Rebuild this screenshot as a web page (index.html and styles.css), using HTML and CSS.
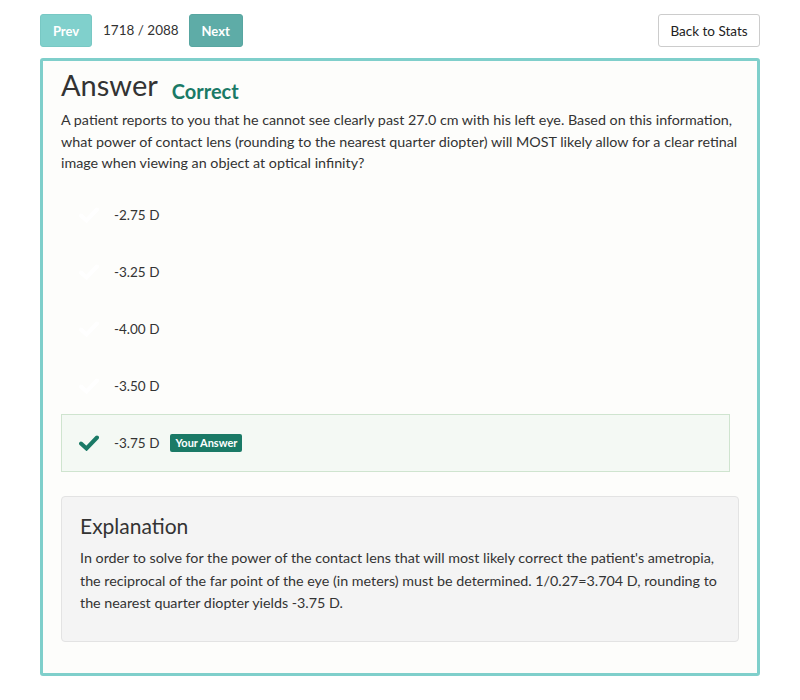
FILE: index.html
```html
<!DOCTYPE html>
<html>
<head>
<meta charset="utf-8">
<link rel="stylesheet" href="styles.css">
</head>
<body>
<div class="page">
  <div class="toolbar">
    <div class="nav">
      <button class="btn btn-prev">Prev</button>
      <span class="counter">1718 / 2088</span>
      <button class="btn btn-next">Next</button>
    </div>
    <button class="btn btn-back">Back to Stats</button>
  </div>
  <div class="panel">
    <div class="title-row">
      <h1 class="title">Answer</h1>
      <span class="status">Correct</span>
    </div>
    <p class="question">A patient reports to you that he cannot see clearly past 27.0 cm with his left eye. Based on this information, what power of contact lens (rounding to the nearest quarter diopter) will MOST likely allow for a clear retinal image when viewing an object at optical infinity?</p>
    <ul class="options">
      <li class="option"><svg class="check check-hidden" viewBox="0 0 20 16"><path d="M2 8.5 L7.5 13.5 L18 2.5" /></svg><span class="opt-text">-2.75 D</span></li>
      <li class="option"><svg class="check check-hidden" viewBox="0 0 20 16"><path d="M2 8.5 L7.5 13.5 L18 2.5" /></svg><span class="opt-text">-3.25 D</span></li>
      <li class="option"><svg class="check check-hidden" viewBox="0 0 20 16"><path d="M2 8.5 L7.5 13.5 L18 2.5" /></svg><span class="opt-text">-4.00 D</span></li>
      <li class="option"><svg class="check check-hidden" viewBox="0 0 20 16"><path d="M2 8.5 L7.5 13.5 L18 2.5" /></svg><span class="opt-text">-3.50 D</span></li>
      <li class="option option-selected"><svg class="check" viewBox="0 0 20 16"><path d="M2 8.5 L7.5 13.5 L18 2.5" /></svg><span class="opt-text">-3.75 D</span><span class="badge">Your Answer</span></li>
    </ul>
    <div class="well">
      <h2 class="well-title">Explanation</h2>
      <p class="well-text">In order to solve for the power of the contact lens that will most likely correct the patient's ametropia, the reciprocal of the far point of the eye (in meters) must be determined. 1/0.27=3.704 D, rounding to the nearest quarter diopter yields -3.75 D.</p>
    </div>
  </div>
</div>
</body>
</html>
```
FILE: styles.css
```css
* { box-sizing: border-box; }
html, body { margin: 0; padding: 0; background: #fff; }
body {
  font-family: Lato, "Open Sans", sans-serif;
  color: #333;
}
.page {
  width: 720px;
  margin-left: 40px;
  padding-top: 14px;
}
.toolbar {
  display: flex;
  justify-content: space-between;
  align-items: center;
  height: 33px;
}
.nav {
  display: flex;
  align-items: center;
}
.btn {
  font-family: Lato, "Open Sans", sans-serif;
  font-size: 13px;
  height: 33px;
  border-radius: 3px;
  cursor: pointer;
  padding: 0 8px;
}
.btn-prev {
  background: #80d0cc;
  border: 1px solid #78c8c4;
  color: #fff;
  font-weight: 700;
  width: 52px;
}
.btn-next {
  background: #5eaca7;
  border: 1px solid #58a6a1;
  color: #fff;
  font-weight: 700;
  width: 54px;
}
.counter {
  font-size: 13.5px;
  color: #333;
  margin: 0 10px 0 11px;
  position: relative;
  top: -1px;
}
.btn-back {
  background: #fff;
  border: 1px solid #ccc;
  color: #222;
  width: 102px;
  font-size: 13.5px;
}
.panel {
  margin-top: 11px;
  border: 3px solid #7fcfcb;
  border-radius: 3px;
  background: #fdfdfb;
  padding: 6px 18px 31px 18px;
}
.title-row {
  display: flex;
  align-items: baseline;
}
.title {
  margin: 0;
  font-size: 29px;
  font-weight: 400;
  color: #333;
  line-height: 36px;
}
.status {
  margin-left: 14px;
  font-size: 20px;
  font-weight: 700;
  color: #1a7a66;
  position: relative;
  top: 3px;
}
.question {
  margin: 6px 0 0 0;
  font-size: 14.3px;
  line-height: 21.7px;
  color: #333;
}
.options {
  list-style: none;
  margin: 12px 9px 0 0;
  padding: 0;
}
.option {
  display: flex;
  align-items: center;
  height: 57px;
  padding-left: 17px;
  border: 1px solid transparent;
}
.option-selected {
  background: #f4f9f4;
  border-color: #cfe4cf;
  height: 58px;
}
.check {
  width: 20px;
  height: 16px;
  fill: none;
  stroke: #1a7a66;
  stroke-width: 4;
  stroke-linecap: round;
  stroke-linejoin: miter;
  flex: none;
}
.check-hidden { stroke: #ffffff; }
.opt-text {
  margin-left: 15px;
  font-size: 13.5px;
  color: #333;
}
.badge {
  margin-left: 11px;
  background: #1a7a66;
  color: #fff;
  font-size: 11px;
  font-weight: 700;
  padding: 3px 5px;
  border-radius: 2px;
  line-height: 12px;
}
.well {
  margin-top: 24px;
  background: #f4f4f4;
  border: 1px solid #e3e3e3;
  border-radius: 4px;
  padding: 15px 18px 26px 18px;
}
.well-title {
  margin: 0;
  font-size: 21px;
  font-weight: 400;
  color: #333;
  line-height: 28px;
}
.well-text {
  margin: 7px 0 0 0;
  font-size: 14.3px;
  line-height: 22.5px;
  color: #333;
}
```
